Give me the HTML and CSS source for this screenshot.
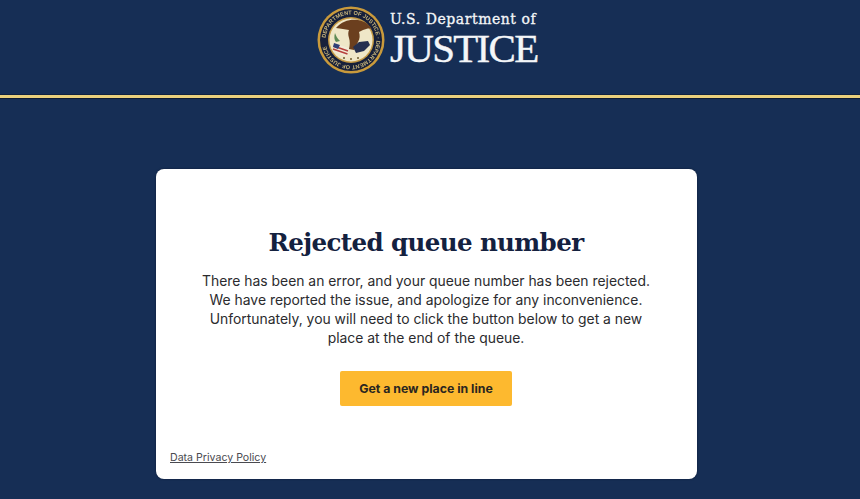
FILE: index.html
```html
<!DOCTYPE html>
<html lang="en">
<head>
<meta charset="utf-8">
<title>Rejected queue number</title>
<link rel="stylesheet" href="styles.css">
</head>
<body>
<header class="site-header">
  <div class="brand">
    <svg class="seal" width="68" height="68" viewBox="0 0 68 68" aria-hidden="true">
      <defs>
        <path id="seal-arc" d="M34 34 m-25.500 0 a25.500 25.500 0 1 1 51 0 a25.500 25.500 0 1 1 -51 0"/>
      </defs>
      <circle cx="34" cy="34" r="33.500" fill="#c99a3c"/>
      <circle cx="34" cy="34" r="31" fill="#17203a"/>
      <circle cx="34" cy="34" r="23" fill="#c59a45"/>
      <circle cx="34" cy="34" r="21.500" fill="#efe7c8"/>
      <text class="seal-text"><textPath href="#seal-arc" startOffset="2">DEPARTMENT OF JUSTICE · DEPARTMENT OF JUSTICE</textPath></text>
      <path d="M19 22c6-7 14-9 22-8 6 1 11 4 14 9-3-1-6 0-9 1l-4 2c1 3 1 7-1 10l-4 8-5-1c1-4 1-8 0-11-1-3-1-6 0-8-4-1-8-1-13-2z" fill="#6b3f1e"/>
      <path d="M36 41l6-5 9-1 2 4-6 6-8 2z" fill="#26304f"/>
      <path d="M17 37l15 5-2 9-14-6z" fill="#f3ecd8"/>
      <path d="M16.500 40l14.500 5M16 43l14.500 5" stroke="#b5403c" stroke-width="1.500"/>
      <path d="M17 37l6 2-2 4-5-2z" fill="#2f3f77"/>
      <path d="M18 27c1 3 2 5 5 8l-4 1c-2-2-2-6-1-9z" fill="#5d8a55"/>
      <g fill="#6d5a2c"><circle cx="27" cy="52" r="1"/><circle cx="34" cy="53" r="1"/><circle cx="41" cy="52" r="1"/></g>
    </svg>
    <div class="brand-text">
      <div class="dept">U.S. Department of</div>
      <div class="justice">JUSTICE</div>
    </div>
  </div>
</header>
<main class="stage">
  <section class="card">
    <h1>Rejected queue number</h1>
    <p class="message">There has been an error, and your queue number has been rejected. We have reported the issue, and apologize for any inconvenience. Unfortunately, you will need to click the button below to get a new place at the end of the queue.</p>
    <a class="cta" href="#">Get a new place in line</a>
    <a class="privacy" href="#">Data Privacy Policy</a>
  </section>
</main>
</body>
</html>
```

FILE: styles.css
```css
* { box-sizing: border-box; }
html, body { margin: 0; height: 100%; }
body {
  background: #162e55;
  font-family: "Inter", "Liberation Sans", sans-serif;
  overflow: hidden;
}
.site-header {
  height: 98px;
  padding-top: 6px;
  display: flex;
  justify-content: center;
  border-bottom: 3px solid #ead07c;
  box-shadow: 0 1px 0 #0d1a33, inset 0 -1px 0 #10213f;
}
.brand { display: flex; align-items: flex-start; gap: 5px; height: 70px; margin-right: 5px; }
.seal { display: block; filter: blur(0.4px); }
.seal-text {
  font-family: "Liberation Sans", sans-serif;
  font-size: 5.600px;
  font-weight: 700;
  fill: #c9b67c;
}
.brand-text { color: #f4f6f8; width: 148px; }
.dept {
  font-family: "DejaVu Serif", serif;
  font-size: 14px;
  line-height: 18px;
  margin-top: 4px;
  letter-spacing: 0.55px;
  -webkit-text-stroke: 0.3px #f4f6f8;
  white-space: nowrap;
}
.justice {
  font-family: "Liberation Serif", serif;
  font-size: 41px;
  line-height: 36px;
  letter-spacing: -1.700px;
  margin-top: 2px;
  -webkit-text-stroke: 0.4px #f4f6f8;
}
.stage { display: flex; justify-content: center; padding-top: 71px; }
.card {
  width: 541px;
  height: 310px;
  margin-right: 7px;
  background: #fff;
  border-radius: 8px;
  padding: 57px 15px 14px 14px;
  display: flex;
  flex-direction: column;
  align-items: center;
  box-shadow: 0 0 2px #0c1a33;
}
h1 {
  margin: 0;
  font-family: "DejaVu Serif", serif;
  font-size: 24.500px;
  line-height: 34px;
  font-weight: 700;
  letter-spacing: -0.600px;
  color: #14213f;
}
.message {
  width: 460px;
  margin: 12px 0 0;
  font-size: 13.900px;
  line-height: 19px;
  text-align: center;
  color: #2b2b2e;
}
.cta {
  margin-top: 23px;
  width: 172px;
  height: 35px;
  display: flex;
  align-items: center;
  justify-content: center;
  background: #fdb92f;
  border-radius: 2px;
  color: #2a2620;
  font-size: 12.300px;
  font-weight: 700;
  text-decoration: none;
}
.privacy {
  margin-top: auto;
  align-self: flex-start;
  color: #4a4a50;
  font-size: 10.600px;
  line-height: 14px;
}
```
